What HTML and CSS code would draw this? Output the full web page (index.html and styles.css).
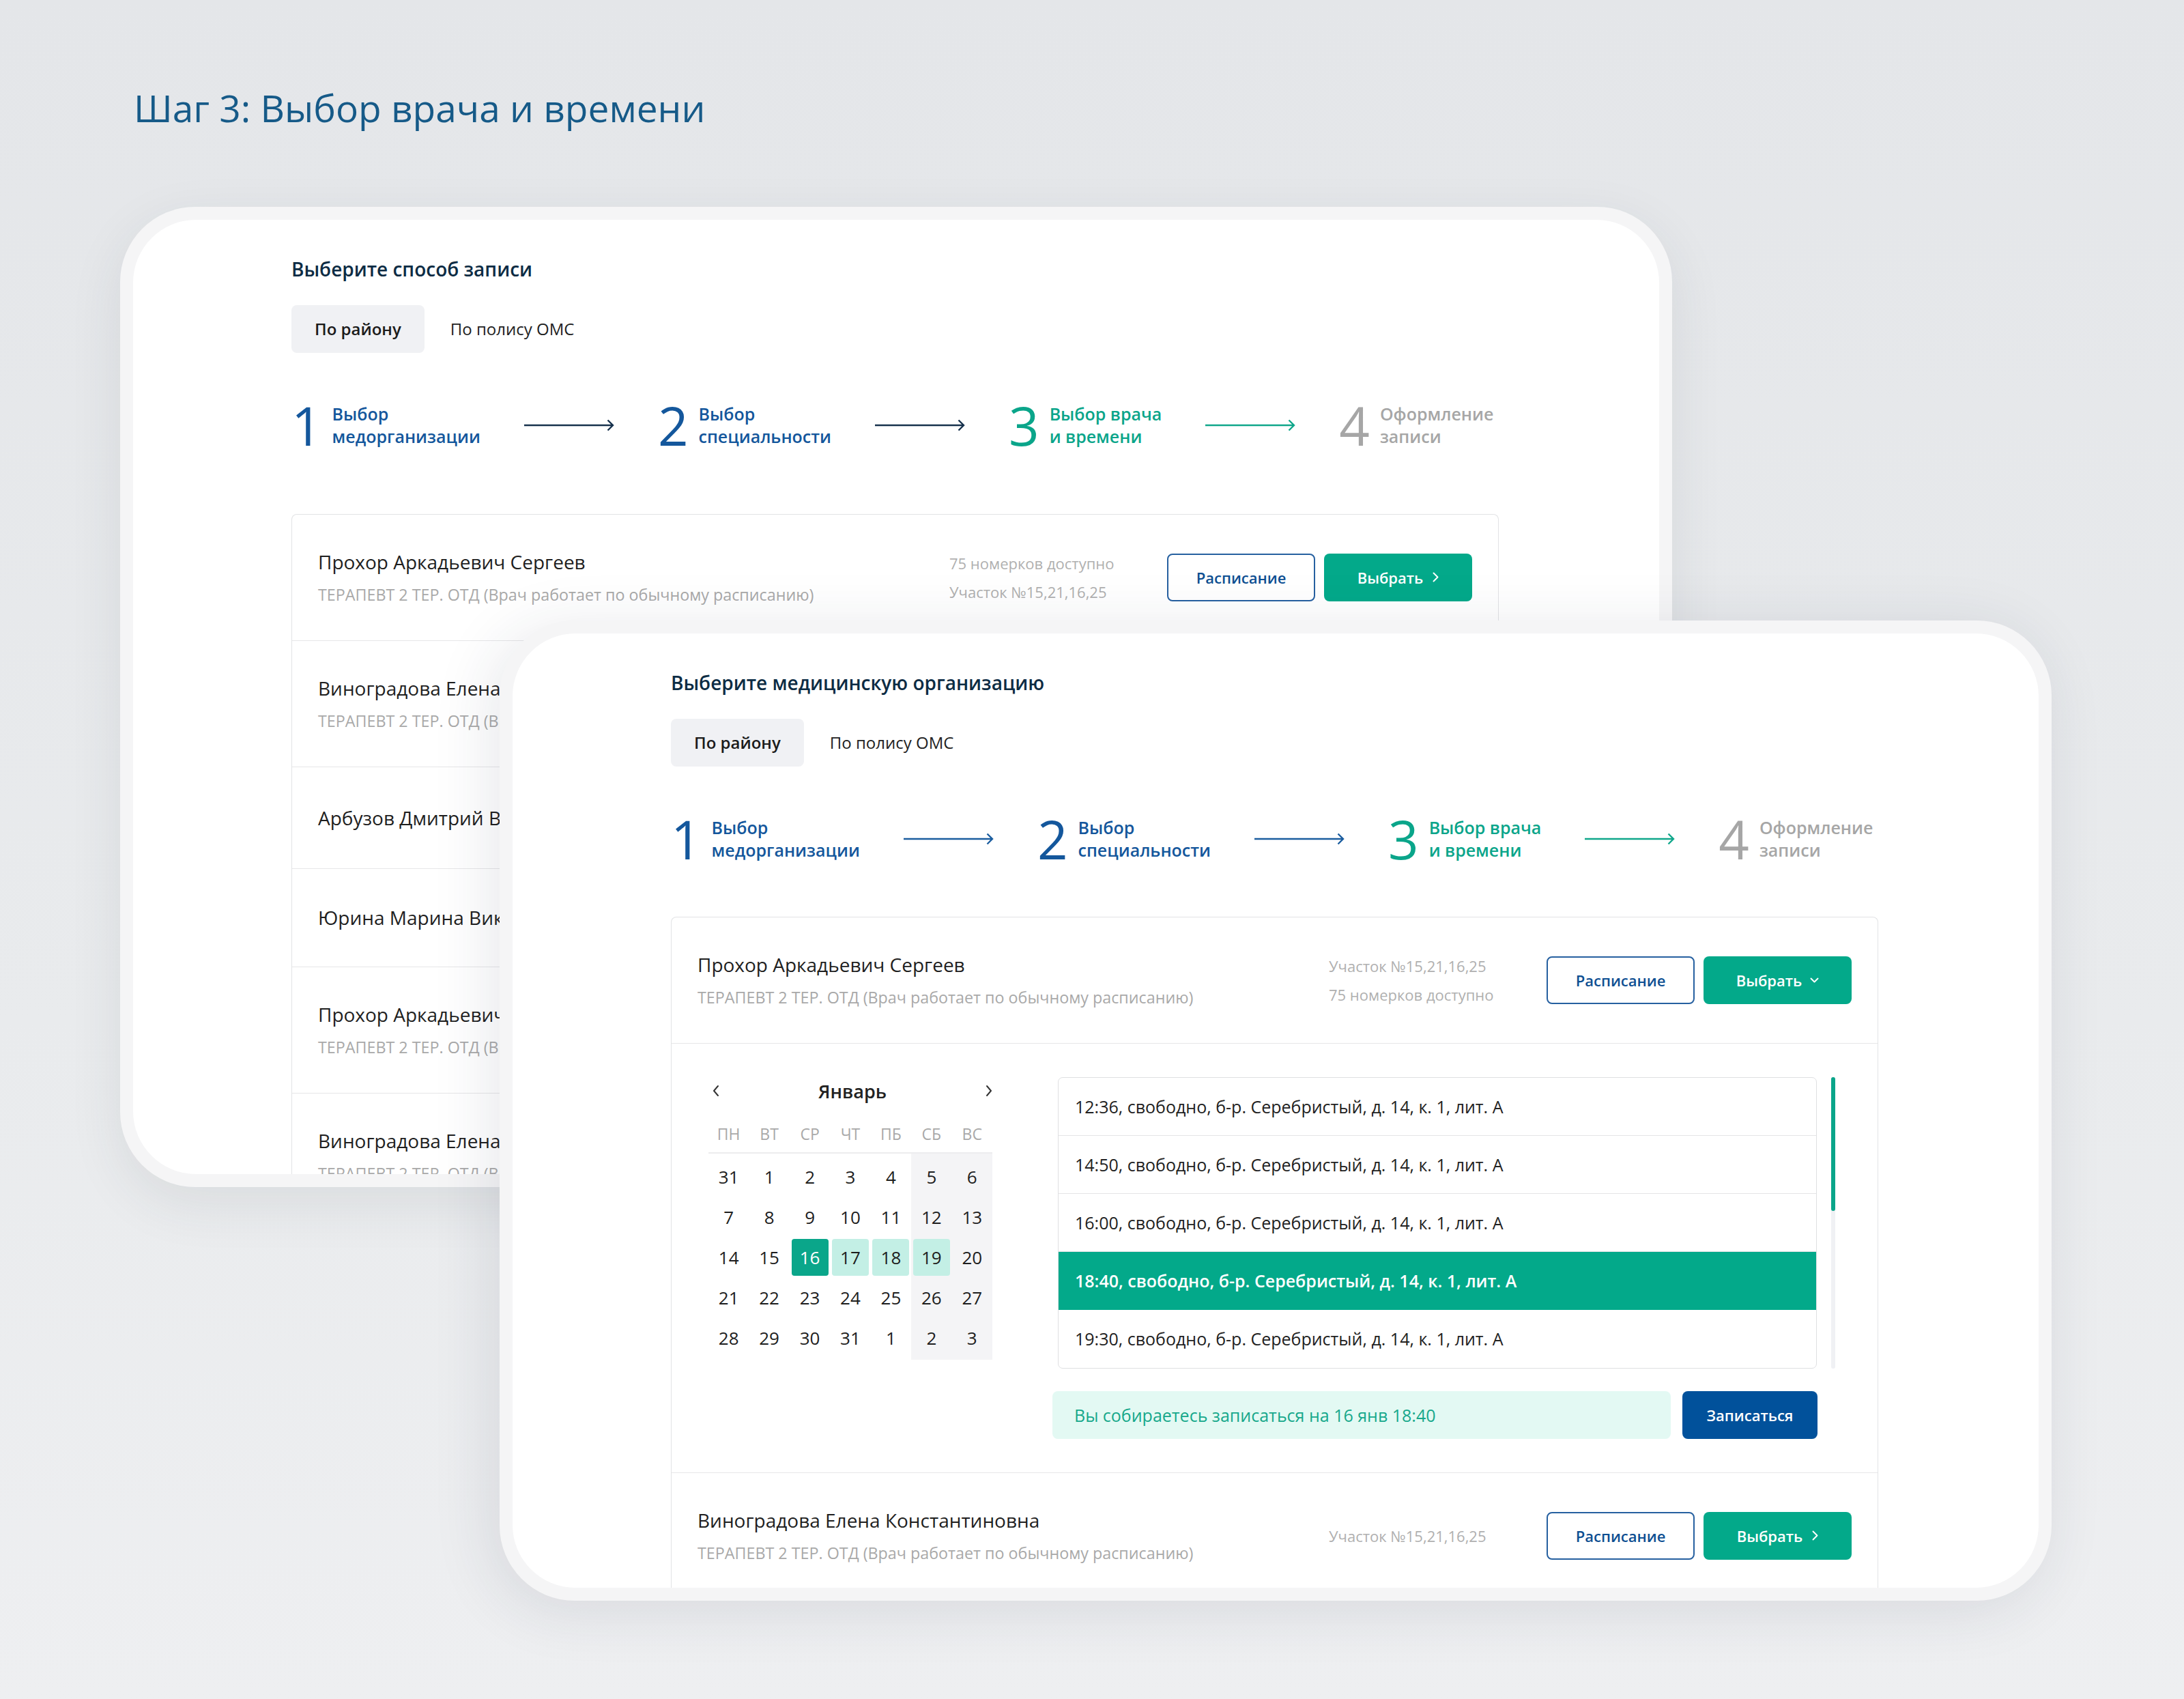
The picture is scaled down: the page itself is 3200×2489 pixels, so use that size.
FILE: index.html
```html
<!DOCTYPE html>
<html lang="ru">
<head>
<meta charset="utf-8">
<title>Шаг 3: Выбор врача и времени</title>
<link rel="stylesheet" href="styles.css">
</head>
<body>
<div class="page">
  <h1 class="page-title">Шаг 3: Выбор врача и времени</h1>
  <div class="stage">
    <!-- back card -->
    <section class="card card-back">
      <div class="card-inner">
        <h2 class="sec-title">Выберите способ записи</h2>
        <div class="tabs"><span class="tab active">По району</span><span class="tab">По полису ОМС</span></div>
        <div class="steps">
          <div class="step done"><span class="num">1</span><span class="label">Выбор<br>медорганизации</span></div>
          <svg class="arrow dark" width="132" height="18" viewBox="0 0 132 18"><path d="M0 9H130M122.5 1.5L130 9L122.5 16.5" fill="none" stroke="currentColor" stroke-width="2.4"/></svg>
          <div class="step done"><span class="num">2</span><span class="label">Выбор<br>специальности</span></div>
          <svg class="arrow dark" width="132" height="18" viewBox="0 0 132 18"><path d="M0 9H130M122.5 1.5L130 9L122.5 16.5" fill="none" stroke="currentColor" stroke-width="2.4"/></svg>
          <div class="step current"><span class="num">3</span><span class="label">Выбор врача<br>и времени</span></div>
          <svg class="arrow teal" width="132" height="18" viewBox="0 0 132 18"><path d="M0 9H130M122.5 1.5L130 9L122.5 16.5" fill="none" stroke="currentColor" stroke-width="2.4"/></svg>
          <div class="step next"><span class="num">4</span><span class="label">Оформление<br>записи</span></div>
        </div>
        <div class="list list-back">
          <div class="row">
            <div class="doc"><div class="name">Прохор Аркадьевич Сергеев</div><div class="sub">ТЕРАПЕВТ 2 ТЕР. ОТД (Врач работает по обычному расписанию)</div></div>
            <div class="info"><div>75 номерков доступно</div><div>Участок №15,21,16,25</div></div>
            <div class="actions"><button class="btn btn-outline">Расписание</button><button class="btn btn-primary">Выбрать<svg class="chev-r" width="9" height="15" viewBox="0 0 9 15"><path d="M1.5 1.5L7.5 7.5L1.5 13.5" fill="none" stroke="currentColor" stroke-width="2" stroke-linecap="round" stroke-linejoin="round"/></svg></button></div>
          </div>
          <div class="row">
            <div class="doc"><div class="name">Виноградова Елена Константиновна</div><div class="sub">ТЕРАПЕВТ 2 ТЕР. ОТД (Врач работает по обычному расписанию)</div></div>
            <div class="info"><div>Участок №15,21,16,25</div></div>
            <div class="actions"><button class="btn btn-outline">Расписание</button><button class="btn btn-primary">Выбрать<svg class="chev-r" width="9" height="15" viewBox="0 0 9 15"><path d="M1.5 1.5L7.5 7.5L1.5 13.5" fill="none" stroke="currentColor" stroke-width="2" stroke-linecap="round" stroke-linejoin="round"/></svg></button></div>
          </div>
          <div class="row">
            <div class="doc"><div class="name">Арбузов Дмитрий Владимирович</div></div>
          </div>
          <div class="row row-short">
            <div class="doc"><div class="name">Юрина Марина Викторовна</div></div>
          </div>
          <div class="row">
            <div class="doc"><div class="name">Прохор Аркадьевич Сергеев</div><div class="sub">ТЕРАПЕВТ 2 ТЕР. ОТД (Врач работает по обычному расписанию)</div></div>
          </div>
          <div class="row">
            <div class="doc"><div class="name">Виноградова Елена Константиновна</div><div class="sub">ТЕРАПЕВТ 2 ТЕР. ОТД (Врач работает по обычному расписанию)</div></div>
          </div>
        </div>
      </div>
    </section>

    <!-- front card -->
    <section class="card card-front">
      <div class="card-inner">
        <h2 class="sec-title">Выберите медицинскую организацию</h2>
        <div class="tabs"><span class="tab active">По району</span><span class="tab">По полису ОМС</span></div>
        <div class="steps">
          <div class="step done"><span class="num">1</span><span class="label">Выбор<br>медорганизации</span></div>
          <svg class="arrow blue" width="132" height="18" viewBox="0 0 132 18"><path d="M0 9H130M122.5 1.5L130 9L122.5 16.5" fill="none" stroke="currentColor" stroke-width="2.4"/></svg>
          <div class="step done"><span class="num">2</span><span class="label">Выбор<br>специальности</span></div>
          <svg class="arrow blue" width="132" height="18" viewBox="0 0 132 18"><path d="M0 9H130M122.5 1.5L130 9L122.5 16.5" fill="none" stroke="currentColor" stroke-width="2.4"/></svg>
          <div class="step current"><span class="num">3</span><span class="label">Выбор врача<br>и времени</span></div>
          <svg class="arrow teal" width="132" height="18" viewBox="0 0 132 18"><path d="M0 9H130M122.5 1.5L130 9L122.5 16.5" fill="none" stroke="currentColor" stroke-width="2.4"/></svg>
          <div class="step next"><span class="num">4</span><span class="label">Оформление<br>записи</span></div>
        </div>
        <div class="list list-front">
          <div class="row">
            <div class="doc"><div class="name">Прохор Аркадьевич Сергеев</div><div class="sub">ТЕРАПЕВТ 2 ТЕР. ОТД (Врач работает по обычному расписанию)</div></div>
            <div class="info"><div>Участок №15,21,16,25</div><div>75 номерков доступно</div></div>
            <div class="actions"><button class="btn btn-outline">Расписание</button><button class="btn btn-primary">Выбрать<svg class="chev-d" width="13" height="9" viewBox="0 0 13 9"><path d="M1.5 1.5L6.5 6.5L11.5 1.5" fill="none" stroke="currentColor" stroke-width="2" stroke-linecap="round" stroke-linejoin="round"/></svg></button></div>
          </div>
          <div class="expand">
            <div class="cal">
              <div class="cal-head">
                <svg class="cal-nav" width="10" height="18" viewBox="0 0 10 18"><path d="M8 2L2 9L8 16" fill="none" stroke="currentColor" stroke-width="2" stroke-linecap="round" stroke-linejoin="round"/></svg>
                <span class="month">Январь</span>
                <svg class="cal-nav" width="10" height="18" viewBox="0 0 10 18"><path d="M2 2L8 9L2 16" fill="none" stroke="currentColor" stroke-width="2" stroke-linecap="round" stroke-linejoin="round"/></svg>
              </div>
              <div class="weekdays"><span>ПН</span><span>ВТ</span><span>СР</span><span>ЧТ</span><span>ПБ</span><span>СБ</span><span>ВС</span></div>
              <div class="days">
                <span class="day"><span class="d">31</span></span><span class="day"><span class="d">1</span></span><span class="day"><span class="d">2</span></span><span class="day"><span class="d">3</span></span><span class="day"><span class="d">4</span></span><span class="day"><span class="d">5</span></span><span class="day"><span class="d">6</span></span>
                <span class="day"><span class="d">7</span></span><span class="day"><span class="d">8</span></span><span class="day"><span class="d">9</span></span><span class="day"><span class="d">10</span></span><span class="day"><span class="d">11</span></span><span class="day"><span class="d">12</span></span><span class="day"><span class="d">13</span></span>
                <span class="day"><span class="d">14</span></span><span class="day"><span class="d">15</span></span><span class="day"><span class="d sel">16</span></span><span class="day"><span class="d avail">17</span></span><span class="day"><span class="d avail">18</span></span><span class="day"><span class="d avail">19</span></span><span class="day"><span class="d">20</span></span>
                <span class="day"><span class="d">21</span></span><span class="day"><span class="d">22</span></span><span class="day"><span class="d">23</span></span><span class="day"><span class="d">24</span></span><span class="day"><span class="d">25</span></span><span class="day"><span class="d">26</span></span><span class="day"><span class="d">27</span></span>
                <span class="day"><span class="d">28</span></span><span class="day"><span class="d">29</span></span><span class="day"><span class="d">30</span></span><span class="day"><span class="d">31</span></span><span class="day"><span class="d">1</span></span><span class="day"><span class="d">2</span></span><span class="day"><span class="d">3</span></span>
              </div>
            </div>
            <div class="slots-col">
              <div class="slots-wrap">
                <div class="slots">
                  <div class="slot">12:36, свободно, б-р. Серебристый, д. 14, к. 1, лит. А</div>
                  <div class="slot">14:50, свободно, б-р. Серебристый, д. 14, к. 1, лит. А</div>
                  <div class="slot">16:00, свободно, б-р. Серебристый, д. 14, к. 1, лит. А</div>
                  <div class="slot slot-sel">18:40, свободно, б-р. Серебристый, д. 14, к. 1, лит. А</div>
                  <div class="slot">19:30, свободно, б-р. Серебристый, д. 14, к. 1, лит. А</div>
                </div>
                <div class="scroll"><div class="thumb"></div></div>
              </div>
              <div class="confirm">
                <div class="confirm-msg">Вы собираетесь записаться на 16 янв 18:40</div>
                <button class="btn btn-dark">Записаться</button>
              </div>
            </div>
          </div>
          <div class="row">
            <div class="doc"><div class="name">Виноградова Елена Константиновна</div><div class="sub">ТЕРАПЕВТ 2 ТЕР. ОТД (Врач работает по обычному расписанию)</div></div>
            <div class="info"><div>Участок №15,21,16,25</div></div>
            <div class="actions"><button class="btn btn-outline">Расписание</button><button class="btn btn-primary">Выбрать<svg class="chev-r" width="9" height="15" viewBox="0 0 9 15"><path d="M1.5 1.5L7.5 7.5L1.5 13.5" fill="none" stroke="currentColor" stroke-width="2" stroke-linecap="round" stroke-linejoin="round"/></svg></button></div>
          </div>
        </div>
      </div>
    </section>
  </div>
</div>
</body>
</html>
```

FILE: styles.css
```css
* { box-sizing: border-box; }

html, body { margin: 0; padding: 0; }

body {
  width: 3200px;
  height: 2489px;
  overflow: hidden;
  background: linear-gradient(180deg, #e4e6e9 0%, #e9ebed 60%, #eeeff1 100%);
  font-family: "Open Sans", "Noto Sans", "Liberation Sans", sans-serif;
  color: #1f1f1f;
}

.page { padding-top: 120px; }

.page-title {
  margin: 0 0 0 196px;
  font-size: 55px;
  line-height: 76px;
  font-weight: 400;
  color: #165a88;
}

.stage {
  display: grid;
  margin-top: 107px;
}

.card {
  grid-area: 1 / 1;
  width: 2274px;
  height: 1436px;
  padding: 19px;
  background: #f5f5f6;
  border-radius: 110px;
  box-shadow: 0 24px 80px rgba(40, 50, 70, 0.09);
}

.card-back { margin-left: 176px; }

.card-front {
  margin-left: 732px;
  margin-top: 606px;
  box-shadow: -12px 12px 90px rgba(40, 50, 70, 0.11);
}

.card-inner {
  height: 100%;
  background: #ffffff;
  border-radius: 92px;
  overflow: hidden;
  padding: 53px 0 0 232px;
}

.sec-title {
  margin: 0;
  font-size: 28px;
  line-height: 38px;
  font-weight: 600;
  color: #0d2c44;
}

.tabs {
  display: flex;
  gap: 4px;
  margin-top: 34px;
}

.tab {
  height: 70px;
  line-height: 70px;
  padding: 0 34px;
  border-radius: 8px;
  font-size: 24px;
  color: #222;
}

.tab.active {
  background: #f0f1f4;
  font-weight: 600;
  color: #1b1b1b;
}

.steps {
  display: flex;
  align-items: center;
  gap: 64px;
  margin-top: 66px;
  height: 80px;
}

.step {
  display: flex;
  align-items: center;
}

.step .num {
  font-size: 78px;
  line-height: 80px;
  font-weight: 400;
}

.step .label {
  margin-left: 15px;
  font-size: 25px;
  line-height: 33px;
  font-weight: 600;
}

.step.done { color: #14579c; }
.step.current { color: #0aa58a; }
.step.next { color: #a6a6a6; }

.arrow { flex: none; display: block; }
.arrow.dark { color: #17324d; }
.arrow.blue { color: #1b5d9f; }
.arrow.teal { color: #10a78b; }

.list {
  width: 1769px;
  border: 1px solid #e2e3e5;
  border-bottom: none;
  border-radius: 8px 8px 0 0;
}

.list-back { margin-top: 90px; }
.list-front { margin-top: 74px; }

.row {
  display: flex;
  align-items: center;
  min-height: 149px;
  padding: 50px 38px 51px 38px;
  border-bottom: 1px solid #e6e6e8;
}

.row-short { min-height: 144px; }

.doc { flex: 1; min-width: 0; }

.name {
  font-size: 28px;
  line-height: 38px;
  color: #1f1f1f;
  white-space: nowrap;
}

.sub {
  margin-top: 13px;
  font-size: 23.3px;
  line-height: 32px;
  color: #a9a9a9;
  white-space: nowrap;
}

.info {
  width: 239px;
  margin-right: 80px;
  display: flex;
  flex-direction: column;
  gap: 10px;
  font-size: 22px;
  line-height: 32px;
  color: #b0b0b0;
  white-space: nowrap;
}

.actions {
  display: flex;
  gap: 13px;
}

.btn {
  display: flex;
  align-items: center;
  justify-content: center;
  width: 217px;
  height: 70px;
  border-radius: 8px;
  font-family: inherit;
  font-size: 22px;
  font-weight: 600;
  border: none;
  padding: 0;
}

.btn-outline {
  background: #fff;
  border: 2px solid #2660a0;
  color: #0e4f92;
}

.btn-primary {
  background: #03a98a;
  color: #fff;
}

.btn-dark {
  width: 198px;
  background: #01519b;
  color: #fff;
}

.chev-r { margin-left: 14px; }
.chev-d { margin-left: 12px; margin-top: 2px; }

/* expanded schedule */
.expand {
  display: flex;
  padding: 49px 0 49px 54px;
  border-bottom: 1px solid #e6e6e8;
}

.cal { width: 416px; flex: none; }

.cal-head {
  display: flex;
  align-items: center;
  justify-content: space-between;
  height: 40px;
  padding: 0 0 0 6px;
  color: #333;
}

.month {
  font-size: 27px;
  font-weight: 600;
  color: #222;
}

.weekdays {
  display: grid;
  grid-template-columns: repeat(7, 1fr);
  margin-top: 16px;
  height: 56px;
  line-height: 54px;
  text-align: center;
  font-size: 23px;
  color: #a9a9a9;
  border-bottom: 2px solid #ececee;
}

.days {
  display: grid;
  grid-template-columns: repeat(7, 1fr);
  grid-auto-rows: 59px;
  padding: 4px 0 3px;
  background: linear-gradient(90deg, transparent 71.5%, #f4f4f6 71.5%);
}

.day {
  display: flex;
  align-items: center;
  justify-content: center;
}

.d {
  display: flex;
  align-items: center;
  justify-content: center;
  width: 54px;
  height: 54px;
  border-radius: 4px;
  font-size: 26px;
  color: #1e1e1e;
}

.d.sel { background: #0aa68a; color: #fff; }
.d.avail { background: #c3efe5; }

.slots-col {
  flex: none;
  margin-left: 88px;
}

.slots-wrap {
  display: flex;
  margin-left: 8px;
}

.slots {
  flex: none;
  width: 1112px;
  border: 1px solid #dfe0e2;
  border-radius: 7px;
  overflow: hidden;
}

.slot {
  height: 85px;
  line-height: 84px;
  padding-left: 24px;
  font-size: 25px;
  color: #222;
  border-bottom: 1px solid #e4e4e6;
  white-space: nowrap;
}

.slot:last-child { border-bottom: none; }

.slot-sel {
  background: #03a98a;
  color: #fff;
  font-weight: 600;
  border-bottom-color: #03a98a;
}

.scroll {
  flex: none;
  width: 6px;
  margin-left: 21px;
  background: #f0f1f4;
  border-radius: 3px;
}

.thumb {
  height: 196px;
  background: #0aa58a;
  border-radius: 3px;
}

.confirm {
  display: flex;
  gap: 17px;
  margin-top: 33px;
}

.confirm-msg {
  width: 906px;
  height: 70px;
  line-height: 70px;
  padding-left: 32px;
  border-radius: 8px;
  background: #e3f9f3;
  color: #16a88b;
  font-size: 25px;
}
```
